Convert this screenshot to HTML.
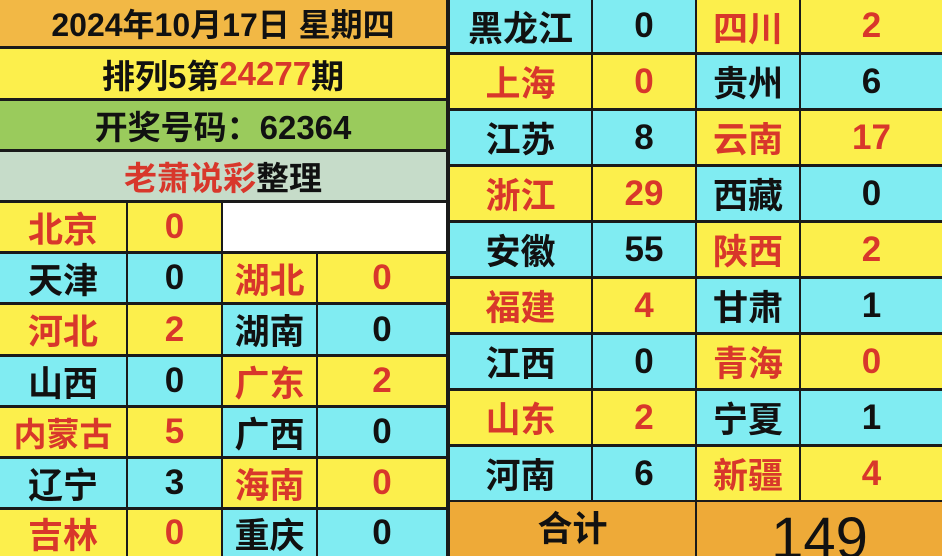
<!DOCTYPE html>
<html><head><meta charset="utf-8"><style>
html,body{margin:0;width:942px;height:556px;overflow:hidden}
body{background:#1a1a1a;position:relative;font-family:"Liberation Sans","Noto Sans CJK SC",sans-serif;font-weight:bold}
.c{position:absolute;display:flex;align-items:center;justify-content:center;font-size:35px;color:#111;box-sizing:border-box;white-space:nowrap}
.y{background:#fcef4c}.b{background:#80ecf2}.r{color:#d8372b}
</style></head><body>
<div class="c" style="left:0;top:0;width:446px;height:46px;background:#f2b845;font-size:32px">2024年10月17日 星期四</div>
<div class="c y" style="left:0;top:49px;width:446px;height:49px;font-size:33px">排列5第<span class="r">24277</span>期</div>
<div class="c" style="left:0;top:101px;width:446px;height:48px;background:#9acb5c;font-size:33px">开奖号码：62364</div>
<div class="c" style="left:0;top:152px;width:446px;height:48px;background:#c6dcc9;font-size:33px"><span class="r">老萧说彩</span>整理</div>

<div class="c y r" style="left:0;top:203px;width:126px;height:48px">北京</div>
<div class="c y r" style="left:128px;top:203px;width:93px;height:48px">0</div>
<div class="c" style="left:223px;top:203px;width:223px;height:48px;background:#fff"></div>

<div class="c b" style="left:0;top:254px;width:126px;height:48px">天津</div>
<div class="c b" style="left:128px;top:254px;width:93px;height:48px">0</div>
<div class="c y r" style="left:223px;top:254px;width:93px;height:48px">湖北</div>
<div class="c y r" style="left:318px;top:254px;width:128px;height:48px">0</div>

<div class="c y r" style="left:0;top:305px;width:126px;height:49px">河北</div>
<div class="c y r" style="left:128px;top:305px;width:93px;height:49px">2</div>
<div class="c b" style="left:223px;top:305px;width:93px;height:49px">湖南</div>
<div class="c b" style="left:318px;top:305px;width:128px;height:49px">0</div>

<div class="c b" style="left:0;top:357px;width:126px;height:48px">山西</div>
<div class="c b" style="left:128px;top:357px;width:93px;height:48px">0</div>
<div class="c y r" style="left:223px;top:357px;width:93px;height:48px">广东</div>
<div class="c y r" style="left:318px;top:357px;width:128px;height:48px">2</div>

<div class="c y r" style="left:0;top:408px;width:126px;height:48px;font-size:33px">内蒙古</div>
<div class="c y r" style="left:128px;top:408px;width:93px;height:48px">5</div>
<div class="c b" style="left:223px;top:408px;width:93px;height:48px">广西</div>
<div class="c b" style="left:318px;top:408px;width:128px;height:48px">0</div>

<div class="c b" style="left:0;top:459px;width:126px;height:48px">辽宁</div>
<div class="c b" style="left:128px;top:459px;width:93px;height:48px">3</div>
<div class="c y r" style="left:223px;top:459px;width:93px;height:48px">海南</div>
<div class="c y r" style="left:318px;top:459px;width:128px;height:48px">0</div>

<div class="c y r" style="left:0;top:510px;width:126px;height:46px">吉林</div>
<div class="c y r" style="left:128px;top:510px;width:93px;height:46px">0</div>
<div class="c b" style="left:223px;top:510px;width:93px;height:46px">重庆</div>
<div class="c b" style="left:318px;top:510px;width:128px;height:46px">0</div>

<div class="c b" style="left:450px;top:0;width:141px;height:52px">黑龙江</div>
<div class="c b" style="left:593px;top:0;width:102px;height:52px">0</div>
<div class="c y r" style="left:697px;top:0;width:102px;height:52px">四川</div>
<div class="c y r" style="left:801px;top:0;width:141px;height:52px">2</div>

<div class="c y r" style="left:450px;top:55px;width:141px;height:53px">上海</div>
<div class="c y r" style="left:593px;top:55px;width:102px;height:53px">0</div>
<div class="c b" style="left:697px;top:55px;width:102px;height:53px">贵州</div>
<div class="c b" style="left:801px;top:55px;width:141px;height:53px">6</div>

<div class="c b" style="left:450px;top:111px;width:141px;height:53px">江苏</div>
<div class="c b" style="left:593px;top:111px;width:102px;height:53px">8</div>
<div class="c y r" style="left:697px;top:111px;width:102px;height:53px">云南</div>
<div class="c y r" style="left:801px;top:111px;width:141px;height:53px">17</div>

<div class="c y r" style="left:450px;top:167px;width:141px;height:53px">浙江</div>
<div class="c y r" style="left:593px;top:167px;width:102px;height:53px">29</div>
<div class="c b" style="left:697px;top:167px;width:102px;height:53px">西藏</div>
<div class="c b" style="left:801px;top:167px;width:141px;height:53px">0</div>

<div class="c b" style="left:450px;top:223px;width:141px;height:53px">安徽</div>
<div class="c b" style="left:593px;top:223px;width:102px;height:53px">55</div>
<div class="c y r" style="left:697px;top:223px;width:102px;height:53px">陕西</div>
<div class="c y r" style="left:801px;top:223px;width:141px;height:53px">2</div>

<div class="c y r" style="left:450px;top:279px;width:141px;height:53px">福建</div>
<div class="c y r" style="left:593px;top:279px;width:102px;height:53px">4</div>
<div class="c b" style="left:697px;top:279px;width:102px;height:53px">甘肃</div>
<div class="c b" style="left:801px;top:279px;width:141px;height:53px">1</div>

<div class="c b" style="left:450px;top:335px;width:141px;height:53px">江西</div>
<div class="c b" style="left:593px;top:335px;width:102px;height:53px">0</div>
<div class="c y r" style="left:697px;top:335px;width:102px;height:53px">青海</div>
<div class="c y r" style="left:801px;top:335px;width:141px;height:53px">0</div>

<div class="c y r" style="left:450px;top:391px;width:141px;height:53px">山东</div>
<div class="c y r" style="left:593px;top:391px;width:102px;height:53px">2</div>
<div class="c b" style="left:697px;top:391px;width:102px;height:53px">宁夏</div>
<div class="c b" style="left:801px;top:391px;width:141px;height:53px">1</div>

<div class="c b" style="left:450px;top:447px;width:141px;height:53px">河南</div>
<div class="c b" style="left:593px;top:447px;width:102px;height:53px">6</div>
<div class="c y r" style="left:697px;top:447px;width:102px;height:53px">新疆</div>
<div class="c y r" style="left:801px;top:447px;width:141px;height:53px">4</div>

<div class="c" style="left:450px;top:502px;width:245px;height:54px;background:#eeaa38;padding-bottom:6px">合计</div>
<div class="c" style="left:697px;top:502px;width:245px;height:54px;background:#eeaa38;font-size:58px;font-weight:normal;padding-top:18px;padding-left:0">149</div>
</body></html>
